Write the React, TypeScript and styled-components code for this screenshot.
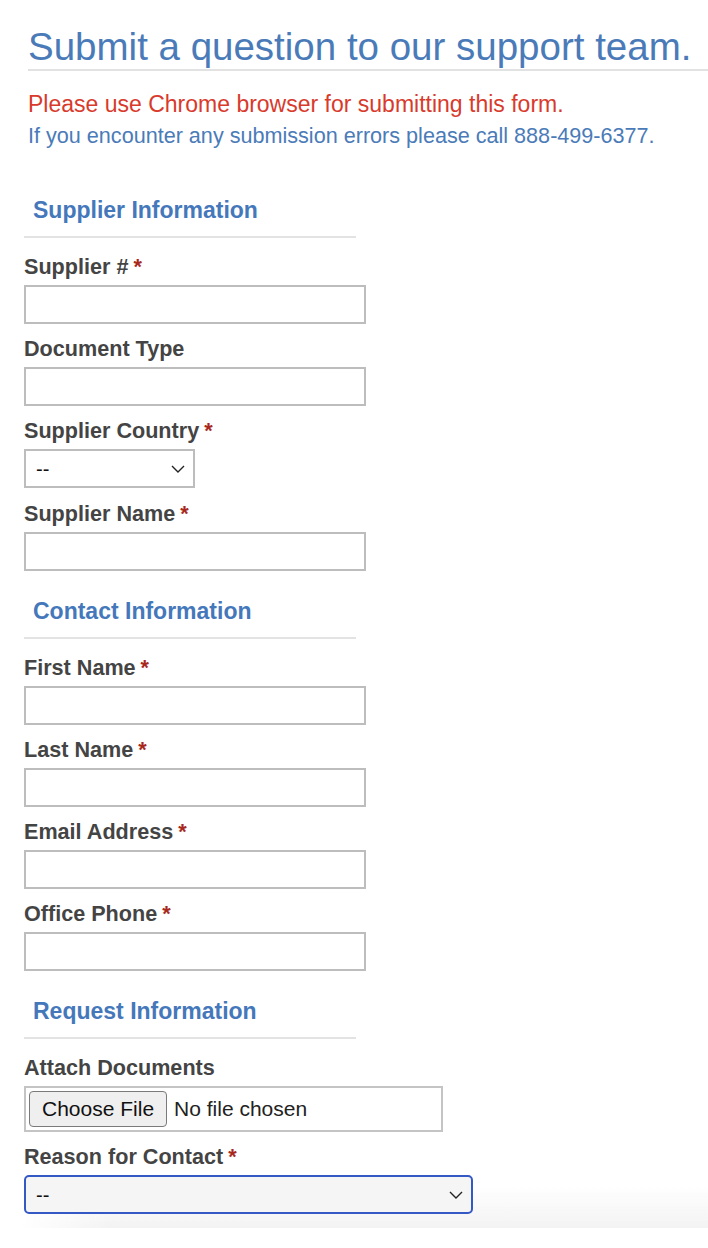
import React from "react";
import styled, { createGlobalStyle } from "styled-components";

const GlobalStyle = createGlobalStyle`
  html, body { margin: 0; padding: 0; background: #ffffff; }
  body { font-family: "Liberation Sans", Arial, Helvetica, sans-serif; }
  * { box-sizing: border-box; }
`;

const Page = styled.div`
  position: relative;
  isolation: isolate;
  padding: 25px 0 14px 0;
  &::after {
    content: "";
    position: absolute;
    left: 0;
    right: 0;
    bottom: 0;
    height: 42px;
    z-index: -1;
    background: linear-gradient(to bottom, rgba(243, 243, 243, 0), #f3f3f3);
    -webkit-mask-image: linear-gradient(to right, transparent 20px, #000 110px);
    mask-image: linear-gradient(to right, transparent 20px, #000 110px);
  }
`;

const Header = styled.header`
  margin-left: 28px;
`;

const Title = styled.h1`
  margin: 0;
  font-size: 38.5px;
  line-height: 44px;
  font-weight: 400;
  color: #4a7bb8;
  border-bottom: 2px solid #e2e2e2;
  white-space: nowrap;
`;

const Notice = styled.p<{ $tone: "warn" | "info" }>`
  margin: 0;
  font-size: ${(p) => (p.$tone === "warn" ? "23px" : "21.6px")};
  line-height: 31px;
  color: ${(p) => (p.$tone === "warn" ? "#d83a2c" : "#4a7bb8")};
  white-space: nowrap;
`;

const Notices = styled.div`
  margin-top: 18px;
`;

const Form = styled.form`
  margin: 45px 0 0 24px;
  display: flex;
  flex-direction: column;
`;

const Section = styled.section`
  display: flex;
  flex-direction: column;
  & + & {
    margin-top: 26px;
  }
`;

const SectionTitle = styled.h2`
  margin: 0;
  width: 332px;
  padding: 0 0 12px 9px;
  font-size: 23px;
  line-height: 28px;
  font-weight: 700;
  color: #4578bb;
  border-bottom: 2px solid #e3e3e3;
`;

const Fields = styled.div`
  margin-top: 17px;
  display: flex;
  flex-direction: column;
  gap: 13.2px;
`;

const Field = styled.div`
  display: flex;
  flex-direction: column;
  gap: 6px;
`;

const Label = styled.label`
  font-size: 21.6px;
  line-height: 24px;
  font-weight: 700;
  color: #444444;
  white-space: nowrap;
`;

const Required = styled.span`
  color: #a8281d;
  margin-left: 5px;
`;

const TextInput = styled.input`
  width: 342px;
  height: 39px;
  margin: 0;
  padding: 0 10px;
  border: 2px solid #bdbdbd;
  border-radius: 0;
  background: #fff;
  font-family: inherit;
  font-size: 20px;
  outline: none;
`;

const SelectWrap = styled.div<{ $w: number }>`
  position: relative;
  width: ${(p) => p.$w}px;
  height: 39px;
`;

const Select = styled.select<{ $focused?: boolean }>`
  appearance: none;
  -webkit-appearance: none;
  width: 100%;
  height: 100%;
  margin: 0;
  padding: 0 30px 0 10px;
  font-family: inherit;
  font-size: 20px;
  color: #111;
  outline: none;
  border: ${(p) => (p.$focused ? "2.5px solid #3559c4" : "2px solid #bdbdbd")};
  border-radius: ${(p) => (p.$focused ? "5px" : "0")};
  background: ${(p) => (p.$focused ? "#f5f5f5" : "#ffffff")};
`;

const Chevron = styled.svg`
  position: absolute;
  right: 10px;
  top: 50%;
  width: 14px;
  height: 8px;
  margin-top: -4px;
  pointer-events: none;
`;

const FileBox = styled.div`
  width: 419px;
  height: 46px;
  border: 2px solid #c4c4c4;
  display: flex;
  align-items: center;
  gap: 7px;
  padding: 0 0 0 3px;
  background: #fff;
`;

const FileButton = styled.button`
  height: 36px;
  padding: 0 12px;
  border: 1px solid #7a7a7a;
  border-radius: 4px;
  background: #efefef;
  font-family: inherit;
  font-size: 21px;
  color: #111;
`;

const FileStatus = styled.span`
  font-size: 21px;
  color: #222;
  white-space: nowrap;
`;

const ChevronIcon = () => (
  <Chevron viewBox="0 0 14 8" aria-hidden="true">
    <path d="M1 1 L7 7 L13 1" fill="none" stroke="#222" strokeWidth="1.4" />
  </Chevron>
);

type FieldDef = { label: string; required?: boolean; kind?: "text" | "select"; width?: number };

const TextField = ({ label, required }: { label: string; required?: boolean }) => (
  <Field>
    <Label>
      {label}
      {required && <Required>*</Required>}
    </Label>
    <TextInput type="text" />
  </Field>
);

const SelectField = ({
  label,
  required,
  width,
  focused,
}: {
  label: string;
  required?: boolean;
  width: number;
  focused?: boolean;
}) => (
  <Field>
    <Label>
      {label}
      {required && <Required>*</Required>}
    </Label>
    <SelectWrap $w={width}>
      <Select $focused={focused} defaultValue="">
        <option value="">--</option>
      </Select>
      <ChevronIcon />
    </SelectWrap>
  </Field>
);

const supplierFields: FieldDef[] = [
  { label: "Supplier #", required: true },
  { label: "Document Type" },
  { label: "Supplier Country", required: true, kind: "select", width: 171 },
  { label: "Supplier Name", required: true },
];

const contactFields: FieldDef[] = [
  { label: "First Name", required: true },
  { label: "Last Name", required: true },
  { label: "Email Address", required: true },
  { label: "Office Phone", required: true },
];

const renderFields = (defs: FieldDef[]) =>
  defs.map((f) =>
    f.kind === "select" ? (
      <SelectField key={f.label} label={f.label} required={f.required} width={f.width ?? 171} />
    ) : (
      <TextField key={f.label} label={f.label} required={f.required} />
    )
  );

export default function App() {
  return (
    <>
      <GlobalStyle />
      <Page>
        <Header>
          <Title>Submit a question to our support team.</Title>
          <Notices>
            <Notice $tone="warn">Please use Chrome browser for submitting this form.</Notice>
            <Notice $tone="info">
              If you encounter any submission errors please call 888-499-6377.
            </Notice>
          </Notices>
        </Header>
        <Form onSubmit={(e) => e.preventDefault()}>
          <Section>
            <SectionTitle>Supplier Information</SectionTitle>
            <Fields>{renderFields(supplierFields)}</Fields>
          </Section>
          <Section>
            <SectionTitle>Contact Information</SectionTitle>
            <Fields>{renderFields(contactFields)}</Fields>
          </Section>
          <Section>
            <SectionTitle>Request Information</SectionTitle>
            <Fields>
              <Field>
                <Label>Attach Documents</Label>
                <FileBox>
                  <FileButton type="button">Choose File</FileButton>
                  <FileStatus>No file chosen</FileStatus>
                </FileBox>
              </Field>
              <SelectField label="Reason for Contact" required width={449} focused />
            </Fields>
          </Section>
        </Form>
      </Page>
    </>
  );
}
